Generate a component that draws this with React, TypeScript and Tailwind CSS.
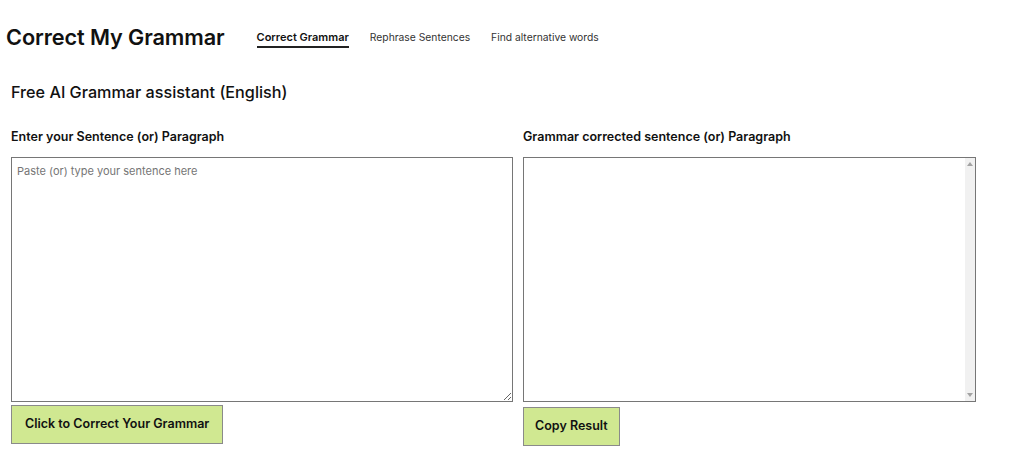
import React, { useState } from "react";

const NAV = ["Correct Grammar", "Rephrase Sentences", "Find alternative words"];

// thin disabled scrollbar like the one the browser draws on the result box
const FakeScrollbar = () => (
  <div className="w-[10px] bg-[#f1f1f1] flex flex-col items-center justify-between py-[4px]">
    <svg width="6" height="4" viewBox="0 0 6 4">
      <path d="M0 4 L3 0 L6 4 Z" fill="#a3a3a3" />
    </svg>
    <svg width="6" height="4" viewBox="0 0 6 4">
      <path d="M0 0 L6 0 L3 4 Z" fill="#a3a3a3" />
    </svg>
  </div>
);

export default function App() {
  const [text, setText] = useState("");
  const [result] = useState("");

  return (
    <div
      className="min-h-[467px] bg-white text-[#111]"
      style={{ fontFamily: "Inter, 'Noto Sans', sans-serif" }}
    >
      <header className="flex items-center pl-[6px] pt-[24px]">
        <h1 className="text-[21.7px] font-semibold tracking-[-0.1px] leading-[26px]">
          Correct My Grammar
        </h1>
        <nav className="ml-[32px] flex items-center gap-[21px] pt-[4px]">
          {NAV.map((item, i) => (
            <a
              key={item}
              href="#"
              className={
                i === 0
                  ? "text-[11px] leading-[14px] font-semibold border-b-2 border-[#222] pb-[2px]"
                  : "text-[10.3px] leading-[14px] text-[#333] pb-[4px]"
              }
            >
              {item}
            </a>
          ))}
        </nav>
      </header>

      <main className="px-[11px]">
        <h2 className="mt-[32px] text-[16.2px] font-medium leading-[20px]">
          Free AI Grammar assistant (English)
        </h2>

        <div className="mt-[27px] flex gap-[10px]">
          <div className="w-[502px] flex flex-col">
            <label className="text-[12.5px] font-semibold leading-[16px]">
              Enter your Sentence (or) Paragraph
            </label>
            <textarea
              value={text}
              onChange={(e) => setText(e.target.value)}
              placeholder="Paste (or) type your sentence here"
              className="mt-[12px] h-[245px] w-full border border-[#767676] px-[5px] py-[5px] text-[11px] placeholder:text-[#757575] outline-none"
            />
            <div>
              <button className="mt-[3px] h-[39px] px-[13px] bg-[#d0e891] border border-[#8a8a8a] text-[12.5px] font-semibold">
                Click to Correct Your Grammar
              </button>
            </div>
          </div>

          <div className="w-[453px] flex flex-col">
            <label className="text-[12.5px] font-semibold leading-[16px]">
              Grammar corrected sentence (or) Paragraph
            </label>
            <div className="mt-[12px] h-[245px] w-full border border-[#767676] flex">
              <textarea
                readOnly
                value={result}
                className="flex-1 h-full px-[5px] py-[5px] text-[11px] outline-none resize-none"
              />
              <FakeScrollbar />
            </div>
            <div>
              <button className="mt-[5px] h-[39px] px-[11px] bg-[#d0e891] border border-[#8a8a8a] text-[12.5px] font-semibold">
                Copy Result
              </button>
            </div>
          </div>
        </div>
      </main>
    </div>
  );
}
